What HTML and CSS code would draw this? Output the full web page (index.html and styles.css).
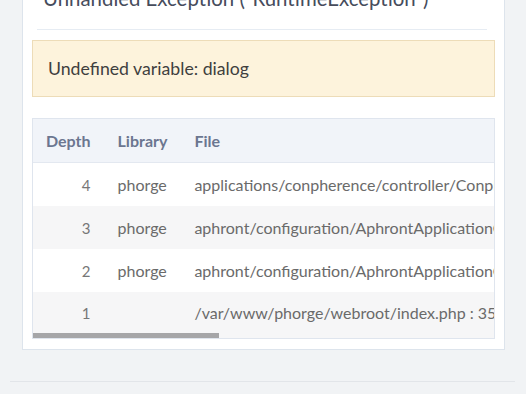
FILE: index.html
```html
<!DOCTYPE html>
<html lang="en">
<head>
   <meta charset="UTF-8">
   <meta name="viewport" content="width=device-width, initial-scale=1.0">
   <title>Unhandled Exception</title>
   <link rel="stylesheet" href="styles.css">
</head>
<body>
   <div class="page">
      <div class="card">
         <div class="card-header">
            <h1>Unhandled Exception ("RuntimeException")</h1>
         </div>
         <div class="notice">
            Undefined variable: dialog
         </div>
         <div class="trace-wrap">
            <div class="trace-clip">
               <table class="trace">
                  <thead>
                     <tr>
                        <th class="depth">Depth</th>
                        <th>Library</th>
                        <th>File</th>
                        <th class="where">Where</th>
                     </tr>
                  </thead>
                  <tbody>
                     <tr>
                        <td class="depth">4</td>
                        <td>phorge</td>
                        <td>applications/conpherence/controller/ConpherenceUpdateController.php : 363</td>
                        <td class="where">ConpherenceUpdateController::handleRequest()</td>
                     </tr>
                     <tr class="alt">
                        <td class="depth">3</td>
                        <td>phorge</td>
                        <td>aphront/configuration/AphrontApplicationConfiguration.php : 284</td>
                        <td class="where">AphrontApplicationConfiguration::processRequest()</td>
                     </tr>
                     <tr>
                        <td class="depth">2</td>
                        <td>phorge</td>
                        <td>aphront/configuration/AphrontApplicationConfiguration.php : 204</td>
                        <td class="where">AphrontApplicationConfiguration::processRequest()</td>
                     </tr>
                     <tr class="alt last">
                        <td class="depth">1</td>
                        <td></td>
                        <td>/var/www/phorge/webroot/index.php : 35</td>
                        <td class="where">AphrontApplicationConfiguration::runHTTPRequest()</td>
                     </tr>
                  </tbody>
               </table>
            </div>
            <div class="scrollbar">
               <div class="scrollbar-thumb"></div>
            </div>
         </div>
      </div>
      <div class="footer-rule"></div>
   </div>
</body>
</html>
```

FILE: styles.css
```css
body {
   margin: 0;
   background: #f1f3f5;
   font-family: Lato, "Liberation Sans", sans-serif;
   overflow: hidden;
}

.page {
   margin-top: -30px;
}

.card {
   margin: 0 21px 0 22px;
   padding: 0 9px 10px;
   background: #ffffff;
   border: 1px solid #dde4ec;
}

.card-header {
   margin: 0 8px 0 5px;
   padding: 13px 0 17px;
   border-bottom: 1px solid #e6ecf3;
}

h1 {
   margin: 0;
   padding-left: 6px;
   font-size: 20.4px;
   line-height: 28px;
   font-weight: normal;
   color: #464c5c;
}

.notice {
   margin-top: 10px;
   padding: 16px 15px;
   line-height: 23px;
   font-size: 17.7px;
   color: #3f3f3f;
   background: #fdf3dc;
   border: 1px solid #eddcb8;
}

.trace-wrap {
   margin-top: 21px;
   border: 1px solid #dfe5ee;
   background: #f6f6f7;
}

.trace-clip {
   overflow: hidden;
}

.scrollbar {
   height: 5px;
   background: #f6f6f7;
}

.scrollbar-thumb {
   width: 186px;
   height: 100%;
   background: #a6a6a8;
}

.trace {
   border-collapse: collapse;
   min-width: 1150px;
   font-size: 16px;
   white-space: nowrap;
}

.trace th,
.trace td {
   height: 43px;
   padding: 0 13px 0 14px;
   text-align: left;
   vertical-align: middle;
}

.trace th.depth,
.trace td.depth {
   padding-left: 13px;
}

.trace th {
   background: #f1f4f9;
   color: #6b7690;
   font-weight: bold;
   border-bottom: 1px solid #e3e8f0;
}

.trace td {
   background: #ffffff;
   color: #6a6a6a;
}

.trace tr.alt td {
   background: #f6f6f7;
}

.trace tr.last td {
   height: 41px;
}

.trace td.depth {
   text-align: right;
   color: #777777;
   font-size: 15px;
}

.trace td.where,
.trace th.where {
   width: 100%;
}

.footer-rule {
   margin: 31px 11px 0 10px;
   border-top: 1px solid #e2e5e9;
}
```
